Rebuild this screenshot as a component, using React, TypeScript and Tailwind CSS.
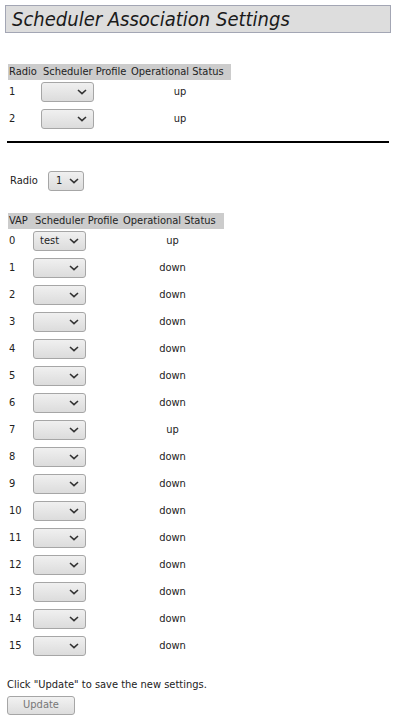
const FONT = "font-['DejaVu_Sans_Condensed','DejaVu_Sans',sans-serif]";

const VAPS = [
  { id: 0, profile: 'test', status: 'up' },
  { id: 1, profile: '', status: 'down' },
  { id: 2, profile: '', status: 'down' },
  { id: 3, profile: '', status: 'down' },
  { id: 4, profile: '', status: 'down' },
  { id: 5, profile: '', status: 'down' },
  { id: 6, profile: '', status: 'down' },
  { id: 7, profile: '', status: 'up' },
  { id: 8, profile: '', status: 'down' },
  { id: 9, profile: '', status: 'down' },
  { id: 10, profile: '', status: 'down' },
  { id: 11, profile: '', status: 'down' },
  { id: 12, profile: '', status: 'down' },
  { id: 13, profile: '', status: 'down' },
  { id: 14, profile: '', status: 'down' },
  { id: 15, profile: '', status: 'down' },
];

function Chevron() {
  return (
    <svg width="10" height="6" viewBox="0 0 10 6" className="shrink-0">
      <path d="M1 1 L5 4.6 L9 1" fill="none" stroke="#333" strokeWidth="1.6" />
    </svg>
  );
}

function Select({ value, className }: { value?: string; className: string }) {
  return (
    <div
      className={`h-[20px] flex items-center justify-between rounded-[3px] border border-[#a6a6a6] bg-gradient-to-b from-[#f0f0f0] to-[#dcdcdc] text-[11px] text-[#222] ${className}`}
    >
      <span>{value}</span>
      <Chevron />
    </div>
  );
}

export default function App() {
  return (
    <div className={`${FONT} text-[11px] text-[#222] bg-white min-h-[721px] px-[5px] pt-[5px]`}>
      {/* Title */}
      <div className="h-[28px] w-[386px] border border-[#a3a6b4] bg-[#dddddd] flex items-center pl-[6px]">
        <h1 className="italic text-[20px] leading-none text-[#1a1a1a]">Scheduler Association Settings</h1>
      </div>

      {/* Radio table */}
      <div className="mt-[31px] ml-[3px] w-[223px]">
        <div className="flex h-[16px] items-center bg-[#cccccc]">
          <div className="w-[33px] pl-[1px]">Radio</div>
          <div className="w-[88px] pl-[2px]">Scheduler Profile</div>
          <div className="flex-1 pl-[2px]">Operational Status</div>
        </div>
        {[1, 2].map(r => (
          <div key={r} className="flex h-[27px] pt-[2px]">
            <div className="w-[33px] pl-[1px] h-[20px] flex items-center">{r}</div>
            <div className="w-[88px]">
              <Select className="w-[53px] pl-[6px] pr-[6px]" />
            </div>
            <div className="flex-1 h-[20px] flex items-center justify-center">up</div>
          </div>
        ))}
      </div>

      <div className="mt-[7px] ml-[2px] w-[382px] h-[2px] bg-black" />

      {/* Radio selector */}
      <div className="mt-[28px] ml-[5px] flex items-center">
        <span className="w-[38px]">Radio</span>
        <Select value="1" className="w-[36px] pl-[7px] pr-[4px]" />
      </div>

      {/* VAP table */}
      <div className="mt-[22px] ml-[3px] w-[216px]">
        <div className="flex h-[16px] items-center bg-[#cccccc]">
          <div className="w-[25px] pl-[1px]">VAP</div>
          <div className="w-[88px] pl-[2px]">Scheduler Profile</div>
          <div className="flex-1 pl-[2px]">Operational Status</div>
        </div>
        {VAPS.map(v => (
          <div key={v.id} className="flex h-[27px] pt-[2px]">
            <div className="w-[25px] pl-[1px] h-[20px] flex items-center">{v.id}</div>
            <div className="w-[88px]">
              <Select value={v.profile} className="w-[53px] pl-[6px] pr-[6px]" />
            </div>
            <div className="flex-1 h-[20px] flex items-center justify-center">{v.status}</div>
          </div>
        ))}
      </div>

      <p className="mt-[16px] ml-[2px]">Click "Update" to save the new settings.</p>
      <button
        disabled
        className="mt-[2px] ml-[2px] w-[68px] h-[19px] rounded-[3px] border border-[#a6a6a6] bg-gradient-to-b from-[#f2f2f2] to-[#dddddd] text-[#777] text-[11px]"
      >
        Update
      </button>
    </div>
  );
}
